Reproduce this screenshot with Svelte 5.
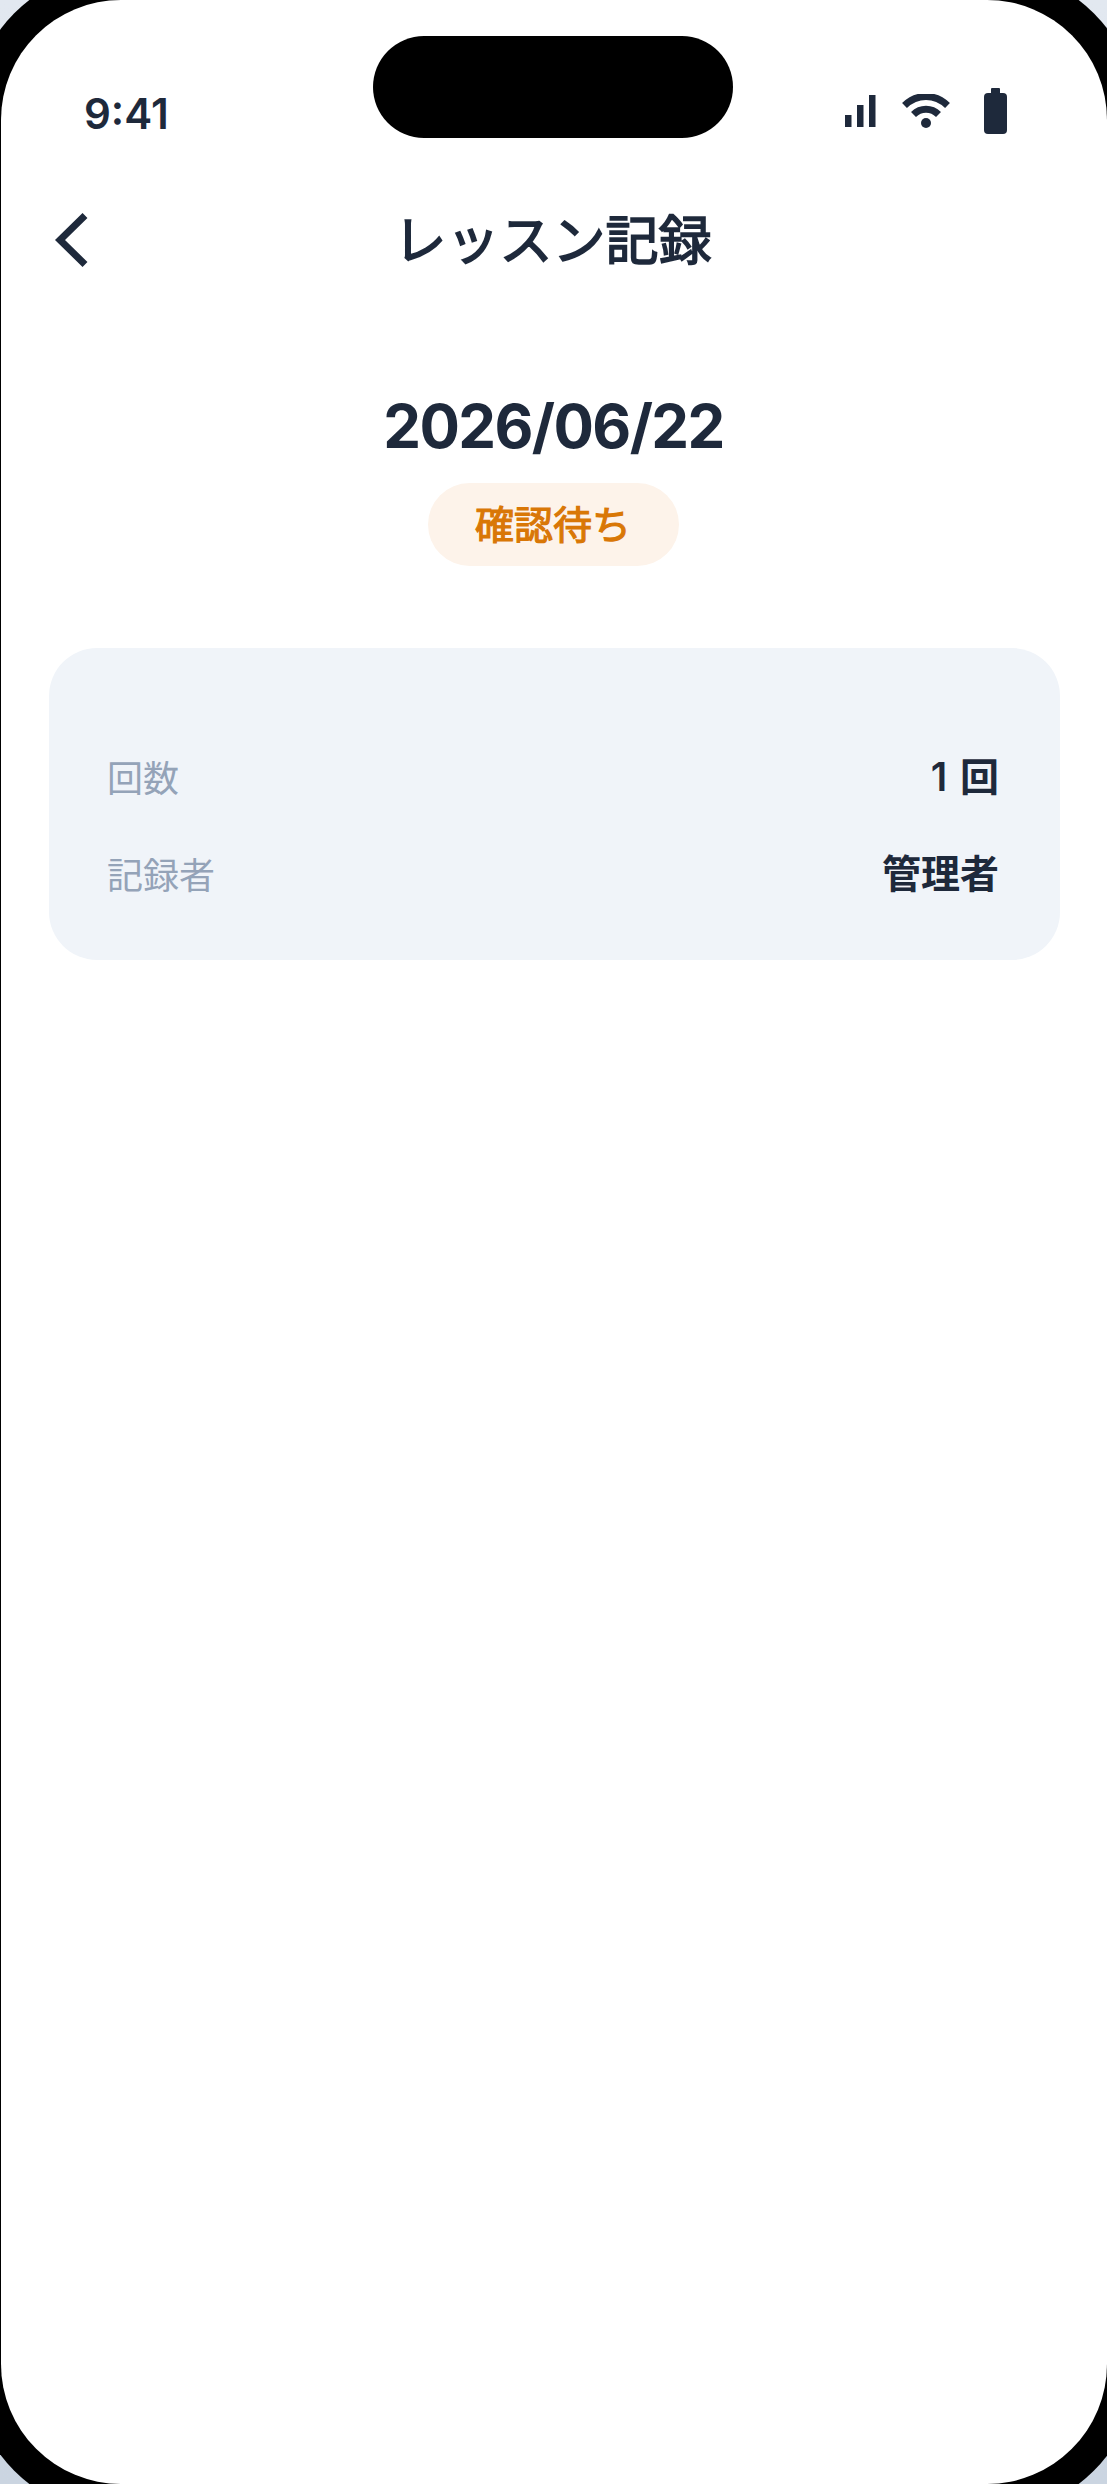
<script lang="ts">
	const rows = [
		{ label: '回数', value: '1 回' },
		{ label: '記録者', value: '管理者' }
	];
</script>

<div class="stage">
	<div class="screen">
		<div class="notch"></div>

		<div class="status">
			<span class="time">9:41</span>
			<div class="status-icons">
				<svg class="signal" viewBox="0 0 31 32" width="31" height="32" aria-hidden="true">
					<rect x="0" y="20" width="6.5" height="12" />
					<rect x="12" y="10" width="6.5" height="22" />
					<rect x="24" y="0" width="6.5" height="32" />
				</svg>
				<svg class="wifi" viewBox="0 0 48 36" width="48" height="36" aria-hidden="true">
					<path d="M2.5 11.5C15 -0.5 33 -0.5 45.5 11.5" />
					<path d="M11.5 20.5C18.5 13.5 29.5 13.5 36.5 20.5" />
					<circle cx="24" cy="29" r="5" />
				</svg>
				<svg class="battery" viewBox="0 0 23 46" width="23" height="46" aria-hidden="true">
					<rect x="7" y="0" width="9" height="7" rx="1" />
					<rect x="0" y="5" width="23" height="41" rx="4" />
				</svg>
			</div>
		</div>

		<header class="nav">
			<svg class="back" viewBox="0 0 34 56" width="34" height="56" aria-hidden="true">
				<path d="M31 3.5L6 28L31 52.5" />
			</svg>
			<h1>レッスン記録</h1>
		</header>

		<main class="content">
			<div class="date">2026/06/22</div>
			<span class="pill">確認待ち</span>

			<section class="card">
				{#each rows as row}
					<div class="row">
						<span class="label">{row.label}</span>
						<span class="value">{row.value}</span>
					</div>
				{/each}
			</section>
		</main>
	</div>
</div>

<style>
	:global(body) {
		margin: 0;
		overflow: hidden;
		background: #fff;
	}
	.stage {
		width: 1107px;
		height: 2484px;
		padding-left: 1px;
		box-sizing: border-box;
		overflow: hidden;
		background: linear-gradient(180deg, #e2e8f0 0%, #cbd5e1 100%);
		font-family: Inter, 'Noto Sans CJK JP', sans-serif;
		color: #1e293b;
	}
	.screen {
		position: relative;
		width: 1106px;
		height: 2484px;
		background: #fff;
		border-radius: 120px;
		box-shadow: 0 0 0 31px #000;
		display: flex;
		flex-direction: column;
	}
	.notch {
		position: absolute;
		top: 36px;
		left: 372px;
		width: 360px;
		height: 102px;
		border-radius: 51px;
		background: #000;
	}
	.status {
		display: flex;
		justify-content: space-between;
		align-items: flex-start;
		height: 188px;
		box-sizing: border-box;
		padding: 89px 100px 0 83px;
	}
	.time {
		font-size: 42px;
		line-height: 50px;
		font-weight: 600;
	}
	.status-icons {
		display: flex;
		align-items: flex-start;
		gap: 26px;
	}
	.status-icons svg {
		display: block;
		fill: #1e293b;
	}
	.signal {
		margin-top: 6px;
	}
	.wifi {
		margin-top: 5px;
	}
	.wifi path {
		fill: none;
		stroke: #1e293b;
		stroke-width: 7;
	}
	.battery {
		margin-top: -1px;
		margin-left: 8px;
	}
	.nav {
		position: relative;
		display: flex;
		align-items: center;
		justify-content: center;
		height: 104px;
	}
	.back {
		position: absolute;
		left: 53px;
		top: 24px;
	}
	.back path {
		fill: none;
		stroke: #1e293b;
		stroke-width: 7;
	}
	h1 {
		margin: 2px 3px 0 0;
		font-size: 53px;
		line-height: 70px;
		font-weight: 400;
		-webkit-text-stroke: 1.6px #1e293b;
	}
	.content {
		display: flex;
		flex-direction: column;
		align-items: center;
		padding: 97px 47px 0 48px;
	}
	.date {
		margin-right: 2px;
		font-size: 60px;
		line-height: 74px;
		font-weight: 700;
		letter-spacing: -0.027em;
	}
	.pill {
		margin-top: 20px;
		margin-right: 3px;
		width: 251px;
		height: 83px;
		box-sizing: border-box;
		padding-bottom: 5px;
		display: flex;
		align-items: center;
		justify-content: center;
		border-radius: 42px;
		background: #fdf3ea;
		color: #d97706;
		font-size: 39px;
		font-weight: 400;
		-webkit-text-stroke: 1.2px #d97706;
	}
	.card {
		align-self: stretch;
		margin-top: 82px;
		height: 312px;
		box-sizing: border-box;
		padding: 97px 61px 0 58px;
		display: flex;
		flex-direction: column;
		gap: 40px;
		background: #f0f4f9;
		border-radius: 48px;
	}
	.row {
		display: flex;
		justify-content: space-between;
		align-items: center;
		height: 57px;
	}
	.label {
		padding-top: 4px;
		font-size: 36px;
		color: #94a3b8;
	}
	.value {
		padding-top: 1px;
		font-size: 39px;
		font-weight: 600;
		word-spacing: 3px;
	}
</style>
